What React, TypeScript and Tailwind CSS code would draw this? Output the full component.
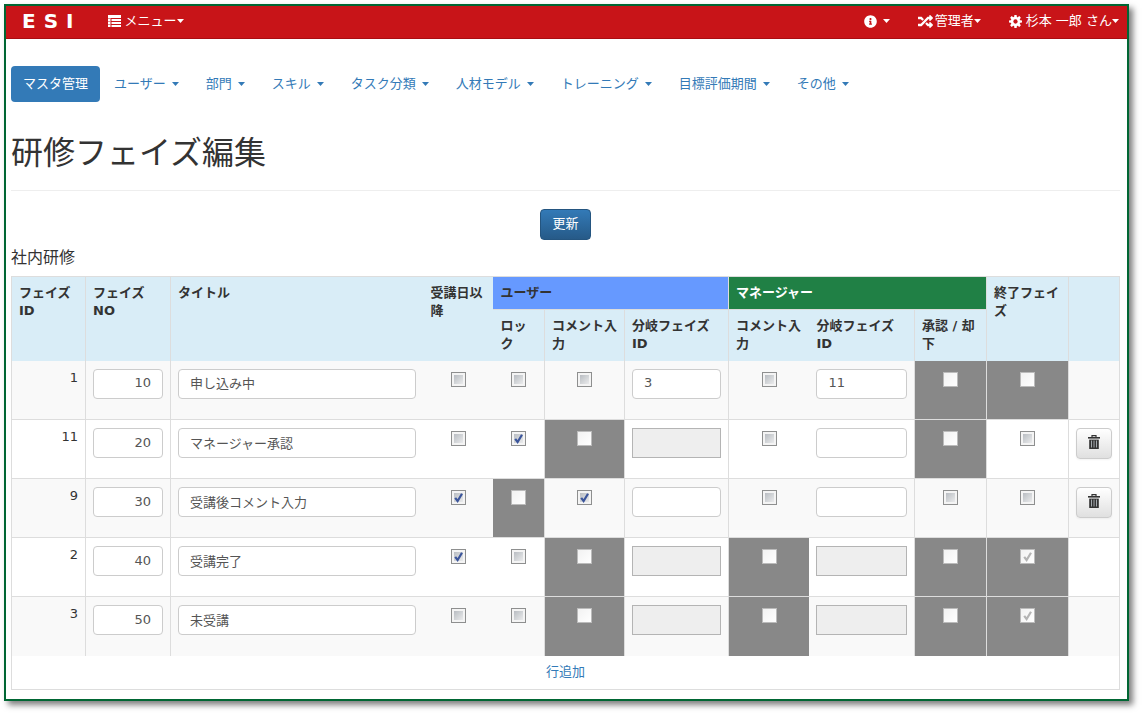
import { useState } from "react";
import type { ReactNode } from "react";
import clsx from "clsx";
import { FaInfoCircle, FaRandom } from "react-icons/fa";

type CheckState = { checked?: boolean; disabled?: boolean };
type BranchState = { value?: string; disabled?: boolean };

type Phase = {
  id: string;
  no: string;
  title: string;
  after: CheckState;
  lock: CheckState;
  userComment: CheckState;
  userBranch: BranchState;
  managerComment: CheckState;
  managerBranch: BranchState;
  approval: CheckState;
  end: CheckState;
  removable?: boolean;
};

const ON = { checked: true };
const OFF = {};
const LOCKED = { disabled: true };
const LOCKED_ON = { checked: true, disabled: true };

const initialPhases: Phase[] = [
  {
    id: "1",
    no: "10",
    title: "申し込み中",
    after: OFF,
    lock: OFF,
    userComment: OFF,
    userBranch: { value: "3" },
    managerComment: OFF,
    managerBranch: { value: "11" },
    approval: LOCKED,
    end: LOCKED,
  },
  {
    id: "11",
    no: "20",
    title: "マネージャー承認",
    after: OFF,
    lock: ON,
    userComment: LOCKED,
    userBranch: LOCKED,
    managerComment: OFF,
    managerBranch: OFF,
    approval: LOCKED,
    end: OFF,
    removable: true,
  },
  {
    id: "9",
    no: "30",
    title: "受講後コメント入力",
    after: ON,
    lock: LOCKED,
    userComment: ON,
    userBranch: OFF,
    managerComment: OFF,
    managerBranch: OFF,
    approval: OFF,
    end: OFF,
    removable: true,
  },
  {
    id: "2",
    no: "40",
    title: "受講完了",
    after: ON,
    lock: OFF,
    userComment: LOCKED,
    userBranch: LOCKED,
    managerComment: LOCKED,
    managerBranch: LOCKED,
    approval: LOCKED,
    end: LOCKED_ON,
  },
  {
    id: "3",
    no: "50",
    title: "未受講",
    after: OFF,
    lock: OFF,
    userComment: LOCKED,
    userBranch: LOCKED,
    managerComment: LOCKED,
    managerBranch: LOCKED,
    approval: LOCKED,
    end: LOCKED_ON,
  },
];

const tabs = [
  "ユーザー",
  "部門",
  "スキル",
  "タスク分類",
  "人材モデル",
  "トレーニング",
  "目標評価期間",
  "その他",
];

function Caret() {
  return (
    <svg width="7" height="4" viewBox="0 0 7 4" fill="currentColor">
      <path d="M0 0h7L3.5 4z" />
    </svg>
  );
}

function ListIcon() {
  return (
    <svg width="13" height="12" viewBox="0 0 13 12" fill="currentColor">
      <path d="M0 0h13v3H0zM0 3h2.5v9H0zM3.5 4h9.5v2H3.5zM3.5 7h9.5v2H3.5zM3.5 10h9.5v2H3.5z" />
      <path d="M0 3.5h2.5M0 6.5h2.5M0 9.5h2.5" stroke="#c81418" strokeOpacity=".5" />
    </svg>
  );
}

function CogIcon() {
  return (
    <svg width="13" height="13" viewBox="0 0 14 14">
      <g fill="currentColor">
        {[0, 45, 90, 135].map((angle) => (
          <path
            key={angle}
            d="M5.8 0h2.4l.4 3v8l-.4 3H5.8l-.4-3V3z"
            transform={`rotate(${angle} 7 7)`}
          />
        ))}
        <circle cx="7" cy="7" r="5" />
      </g>
      <circle cx="7" cy="7" r="2.3" fill="#c81418" />
    </svg>
  );
}

function TrashIcon() {
  return (
    <svg width="12" height="14" viewBox="0 0 12 14" fill="none" stroke="currentColor">
      <path d="M4 2V.7h4V2" strokeWidth="1.2" />
      <path d="M0 2.8h12" strokeWidth="1.6" />
      <path d="M1.2 4.6h9.6V14H1.2z" fill="currentColor" stroke="none" />
      <path d="M3.5 5.5v7M6 5.5v7M8.5 5.5v7" stroke="#a3a8ad" strokeWidth="1" />
    </svg>
  );
}

function Header() {
  return (
    <header className="box-content flex h-[30px] items-center justify-between border-b border-[#a90d12] bg-[#c81418] pr-2 pb-0.5 pl-4 text-white">
      <div className="flex items-center gap-[34px]">
        <a href="#" className="flex gap-2 text-xl leading-5 font-bold">
          <span>E</span>
          <span>S</span>
          <span>I</span>
        </a>
        <button type="button" className="flex items-center">
          <ListIcon />
          <span className="ml-1">メニュー</span>
          <Caret />
        </button>
      </div>
      <nav className="flex items-center gap-7">
        <button type="button" aria-label="情報" className="flex items-center gap-1.5">
          <FaInfoCircle size={13} />
          <Caret />
        </button>
        <button type="button" className="flex items-center">
          <FaRandom size={15} />
          <span className="ml-0.5">管理者</span>
          <Caret />
        </button>
        <button type="button" className="flex items-center">
          <CogIcon />
          <span className="ml-1">杉本 一郎 さん</span>
          <Caret />
        </button>
      </nav>
    </header>
  );
}

function Checkbox({
  checked,
  disabled,
  labelledBy,
}: CheckState & { labelledBy: string }) {
  return (
    <span className="relative mx-auto block size-[15px]">
      <input
        type="checkbox"
        defaultChecked={checked}
        disabled={disabled}
        aria-labelledby={labelledBy}
        className={clsx(
          "peer block size-[15px] appearance-none border bg-linear-to-br",
          disabled
            ? "border-[#bbb] from-[#f2f2f2] to-white"
            : "border-[#8e8f8f] from-[#aeb3b9] to-[#f6f6f6] shadow-[inset_0_0_0_2px_#f4f4f4]"
        )}
      />
      <svg
        viewBox="0 0 15 15"
        className={clsx(
          "pointer-events-none absolute inset-0 hidden peer-checked:block",
          disabled ? "text-[#b4b4b4]" : "text-[#3b559b]"
        )}
      >
        <path
          d="M4.2 7.8 6.6 11 11 3.8"
          fill="none"
          stroke="currentColor"
          strokeWidth="2.2"
        />
      </svg>
    </span>
  );
}

function TextBox({
  value,
  disabled,
  alignRight,
  labelledBy,
}: BranchState & { alignRight?: boolean; labelledBy: string }) {
  return (
    <input
      type="text"
      defaultValue={value}
      disabled={disabled}
      aria-labelledby={labelledBy}
      className={clsx(
        "block h-[30px] w-full border px-[11px] pb-0.5 text-[#555]",
        alignRight && "text-right",
        disabled
          ? "border-[#b4b4b4] bg-[#eee]"
          : "rounded border-[#ccc] bg-white"
      )}
    />
  );
}

function HeadCell({
  id,
  children,
  className,
  rowSpan,
  colSpan,
}: {
  id?: string;
  children?: ReactNode;
  className?: string;
  rowSpan?: number;
  colSpan?: number;
}) {
  return (
    <th
      id={id}
      rowSpan={rowSpan}
      colSpan={colSpan}
      className={clsx("border-[#ddd] p-[7px] text-left align-top", className)}
    >
      {children}
    </th>
  );
}

function CheckCell({
  state,
  labelledBy,
  divider,
}: {
  state: CheckState;
  labelledBy: string;
  divider?: boolean;
}) {
  return (
    <td
      className={clsx(
        "border-t border-[#ddd] pt-[11px] align-top",
        divider && "border-l",
        state.disabled && "bg-[#888]"
      )}
    >
      <Checkbox {...state} labelledBy={labelledBy} />
    </td>
  );
}

function PhaseRow({ phase, onRemove }: { phase: Phase; onRemove: () => void }) {
  const cell = "border-t border-[#ddd] px-[7px] pt-2 align-top";
  return (
    <tr className="h-[59px] odd:bg-[#f9f9f9] first:*:border-t-0">
      <td className={clsx(cell, "text-right")}>{phase.id}</td>
      <td className={clsx(cell, "border-l")}>
        <TextBox value={phase.no} alignRight labelledBy="col-no" />
      </td>
      <td className={clsx(cell, "border-l")}>
        <TextBox value={phase.title} labelledBy="col-title" />
      </td>
      <CheckCell state={phase.after} labelledBy="col-after" />
      <CheckCell state={phase.lock} labelledBy="col-user col-lock" />
      <CheckCell state={phase.userComment} labelledBy="col-user col-user-comment" divider />
      <td className={clsx(cell, "border-l")}>
        <TextBox {...phase.userBranch} labelledBy="col-user col-user-branch" />
      </td>
      <CheckCell
        state={phase.managerComment}
        labelledBy="col-manager col-manager-comment"
        divider
      />
      <td className={cell}>
        <TextBox {...phase.managerBranch} labelledBy="col-manager col-manager-branch" />
      </td>
      <CheckCell state={phase.approval} labelledBy="col-manager col-approval" divider />
      <CheckCell state={phase.end} labelledBy="col-end" divider />
      <td className={clsx(cell, "border-l")}>
        {phase.removable && (
          <button
            type="button"
            aria-label="削除"
            onClick={onRemove}
            className="flex h-[31px] w-full items-center justify-center rounded border border-[#ccc] bg-linear-to-b from-white to-[#e0e0e0] pb-1 shadow-xs"
          >
            <TrashIcon />
          </button>
        )}
      </td>
    </tr>
  );
}

function PhaseTable() {
  const [phases, setPhases] = useState(initialPhases);

  function addRow() {
    const last = phases.length + 1;
    setPhases([
      ...phases,
      {
        id: "",
        no: String(last * 10),
        title: "",
        after: OFF,
        lock: OFF,
        userComment: OFF,
        userBranch: OFF,
        managerComment: OFF,
        managerBranch: OFF,
        approval: OFF,
        end: OFF,
        removable: true,
      },
    ]);
  }

  return (
    <table className="w-full table-fixed border border-[#ddd]">
      <colgroup>
        <col className="w-[74px]" />
        <col className="w-[85px]" />
        <col />
        <col className="w-[70px]" />
        <col className="w-[51px]" />
        <col className="w-[80px]" />
        <col className="w-[104px]" />
        <col className="w-[81px]" />
        <col className="w-[105px]" />
        <col className="w-[72px]" />
        <col className="w-[82px]" />
        <col className="w-[51px]" />
      </colgroup>
      <thead className="bg-[#d9edf7]">
        <tr className="h-[33px]">
          <HeadCell rowSpan={2}>フェイズ ID</HeadCell>
          <HeadCell id="col-no" rowSpan={2} className="border-l">
            フェイズ NO
          </HeadCell>
          <HeadCell id="col-title" rowSpan={2} className="border-l">
            タイトル
          </HeadCell>
          <HeadCell id="col-after" rowSpan={2}>
            受講日以降
          </HeadCell>
          <HeadCell id="col-user" colSpan={3} className="border-b bg-[#6699ff]">
            ユーザー
          </HeadCell>
          <HeadCell
            id="col-manager"
            colSpan={3}
            className="border-b border-l bg-[#208045] text-white"
          >
            マネージャー
          </HeadCell>
          <HeadCell id="col-end" rowSpan={2} className="border-l">
            終了フェイズ
          </HeadCell>
          <HeadCell rowSpan={2} className="border-l" />
        </tr>
        <tr className="h-[51px]">
          <HeadCell id="col-lock">ロック</HeadCell>
          <HeadCell id="col-user-comment" className="border-l">
            コメント入力
          </HeadCell>
          <HeadCell id="col-user-branch" className="border-l">
            分岐フェイズ ID
          </HeadCell>
          <HeadCell id="col-manager-comment" className="border-l">
            コメント入力
          </HeadCell>
          <HeadCell id="col-manager-branch">分岐フェイズ ID</HeadCell>
          <HeadCell id="col-approval" className="border-l">
            承認 / 却下
          </HeadCell>
        </tr>
      </thead>
      <tbody>
        {phases.map((phase, index) => (
          <PhaseRow
            key={phase.no}
            phase={phase}
            onRemove={() => setPhases(phases.filter((_, i) => i !== index))}
          />
        ))}
      </tbody>
      <tfoot>
        <tr className="h-[34px]">
          <td colSpan={12} className="text-center">
            <a
              href="#"
              className="text-[#337ab7]"
              onClick={(e) => {
                e.preventDefault();
                addRow();
              }}
            >
              行追加
            </a>
          </td>
        </tr>
      </tfoot>
    </table>
  );
}

export default function App() {
  return (
    <div
      lang="ja"
      className="bg-white pt-1 pr-[13px] pb-3 pl-1 font-['DejaVu_Sans','Noto_Sans_CJK_JP',sans-serif] text-[13px] leading-[18px] text-[#333]"
    >
      <div className="border-2 border-[#006633] bg-white shadow-[4px_4px_6px_#00000080]">
        <Header />
        <main className="pt-[27px] pr-[7px] pb-[9px] pl-[5px]">
          <nav className="flex items-center gap-px text-[#337ab7]">
            <a href="#" className="rounded bg-[#337ab7] px-3 py-[9px] text-white">
              マスタ管理
            </a>
            {tabs.map((tab) => (
              <a key={tab} href="#" className="flex items-center gap-1.5 px-[13px] py-[9px]">
                {tab}
                <Caret />
              </a>
            ))}
          </nav>
          <h1 className="mt-[29px] border-b border-[#eee] pb-3.5 text-[32px] leading-[45px]">
            研修フェイズ編集
          </h1>
          <div className="mt-[18px] flex justify-center">
            <button
              type="button"
              className="h-[31px] rounded border border-[#245580] bg-linear-to-b from-[#337ab7] to-[#265a88] px-[11px] pb-0.5 text-white"
            >
              更新
            </button>
          </div>
          <h2 className="mt-2 mb-2 text-base leading-5">社内研修</h2>
          <PhaseTable />
        </main>
      </div>
    </div>
  );
}
